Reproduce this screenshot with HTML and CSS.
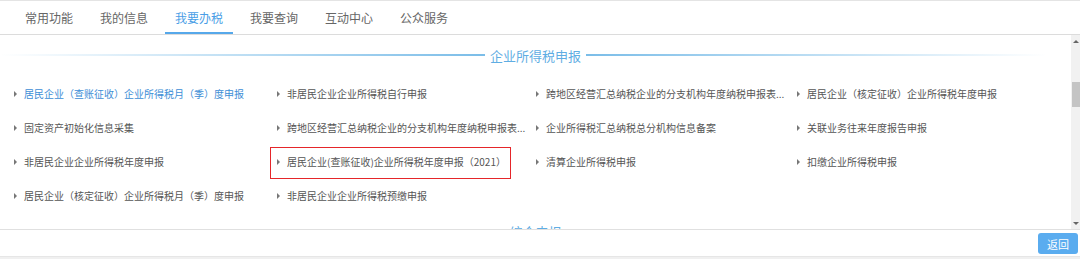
FILE: index.html
```html
<!DOCTYPE html>
<html lang="zh-CN">
<head>
  <meta charset="UTF-8" />
  <meta name="viewport" content="width=device-width, initial-scale=1.0"/>
  <title>我要办税</title>
  <link rel="stylesheet" href="styles.css">
</head>
<body>
  <ul class="tabs">
    <li class="tab">常用功能</li>
    <li class="tab">我的信息</li>
    <li class="tab active">我要办税</li>
    <li class="tab">我要查询</li>
    <li class="tab">互动中心</li>
    <li class="tab">公众服务</li>
  </ul>

  <div class="panel">
    <div class="scroll-area">
      <div class="sec-title">
        <span class="line left"></span>
        <span class="sec-name">企业所得税申报</span>
        <span class="line right"></span>
      </div>
      <ul class="items">
        <li class="item visited">居民企业（查账征收）企业所得税月（季）度申报</li>
        <li class="item">非居民企业企业所得税自行申报</li>
        <li class="item">跨地区经营汇总纳税企业的分支机构年度纳税申报表...</li>
        <li class="item">居民企业（核定征收）企业所得税年度申报</li>

        <li class="item">固定资产初始化信息采集</li>
        <li class="item">跨地区经营汇总纳税企业的分支机构年度纳税申报表...</li>
        <li class="item">企业所得税汇总纳税总分机构信息备案</li>
        <li class="item">关联业务往来年度报告申报</li>

        <li class="item">非居民企业企业所得税年度申报</li>
        <li class="item marked">居民企业(查账征收)企业所得税年度申报（2021）</li>
        <li class="item">清算企业所得税申报</li>
        <li class="item">扣缴企业所得税申报</li>

        <li class="item">居民企业（核定征收）企业所得税月（季）度申报</li>
        <li class="item">非居民企业企业所得税预缴申报</li>
      </ul>

      <div class="sec-title next">
        <span class="line left"></span>
        <span class="sec-name">综合申报</span>
        <span class="line right"></span>
      </div>
    </div>

    <!-- 滚动条 -->
    <div class="scrollbar">
      <span class="sb-btn"><i class="arrow-up"></i></span>
      <span class="sb-track"><span class="sb-thumb"></span></span>
      <span class="sb-btn"><i class="arrow-down"></i></span>
    </div>
  </div>

  <div class="footer">
    <button class="btn-back">返回</button>
  </div>
</body>
</html>
```

FILE: styles.css
```css
* {
  box-sizing: border-box;
}
body {
  margin: 0;
  font-family: "Noto Sans CJK SC", "Noto Sans", sans-serif;
  background: #f0f0f0;
  color: #555;
}
ul {
  list-style: none;
  margin: 0;
  padding: 0;
}

/* 顶部标签 */
.tabs {
  display: flex;
  gap: 7px;
  padding-left: 15px;
  background: white;
  border-top: 1px solid #e4e4e4;
  border-bottom: 1px solid #dcdcdc;
}
.tab {
  height: 33px;
  line-height: 33px;
  padding: 0 10px;
  font-size: 12px;
  color: #666;
}
.tab.active {
  color: #4a9ee6;
  box-shadow: inset 0 -2px 0 #56a8ea;
}

/* 内容区 */
.panel {
  display: flex;
  height: 194px;
  background: white;
}
.scroll-area {
  flex: 1;
  overflow: hidden;
}
.sec-title {
  display: flex;
  align-items: center;
  height: 24px;
  margin-top: 8px;
}
.sec-title.next {
  margin-top: 6px;
}
.line {
  flex: 1;
  height: 2px;
}
.line.left {
  background: linear-gradient(to right, rgba(123,189,232,0), #7bbde8);
}
.line.right {
  background: linear-gradient(to right, #7bbde8, rgba(123,189,232,0) 95%);
}
.sec-name {
  padding: 0 5px;
  font-size: 13px;
  color: #5fade3;
}
.items {
  display: grid;
  grid-template-columns: 263px 259px 261px 261px;
  padding-left: 14px;
  margin-top: 10px;
}
.item {
  position: relative;
  height: 34px;
  line-height: 34px;
  padding-left: 10px;
  font-size: 10px;
  color: #555;
  white-space: nowrap;
}
.item::before {
  content: "";
  position: absolute;
  left: 0;
  top: 14px;
  border-left: 3px solid #777;
  border-top: 3px solid transparent;
  border-bottom: 3px solid transparent;
}
.item.visited {
  color: #3d8ed6;
}
.item.marked::after {
  content: "";
  position: absolute;
  left: -7px;
  top: 2px;
  width: 239px;
  height: 30px;
  border: 1.5px solid #e5262a;
}

/* 滚动条 */
.scrollbar {
  display: flex;
  flex-direction: column;
  width: 9px;
  background: #f1f1f1;
}
.sb-btn {
  display: flex;
  justify-content: center;
  align-items: center;
  height: 12px;
}
.arrow-up {
  border-bottom: 3px solid #666;
  border-left: 3px solid transparent;
  border-right: 3px solid transparent;
}
.arrow-down {
  border-top: 3px solid #666;
  border-left: 3px solid transparent;
  border-right: 3px solid transparent;
}
.sb-track {
  flex: 1;
}
.sb-thumb {
  display: block;
  width: 8px;
  height: 25px;
  margin: 35px 0 0 1px;
  background: #c4c4c4;
}

/* 底部 */
.footer {
  display: flex;
  justify-content: flex-end;
  height: 28px;
  padding: 3px 2px 0 0;
  background: white;
  border-top: 1px solid #e0e0e0;
  border-bottom: 1px solid #e6e6e6;
}
.btn-back {
  width: 40px;
  height: 21px;
  padding: 0;
  border: none;
  border-radius: 3px;
  background: #5aacef;
  color: white;
  font-family: inherit;
  font-size: 11px;
}
```
